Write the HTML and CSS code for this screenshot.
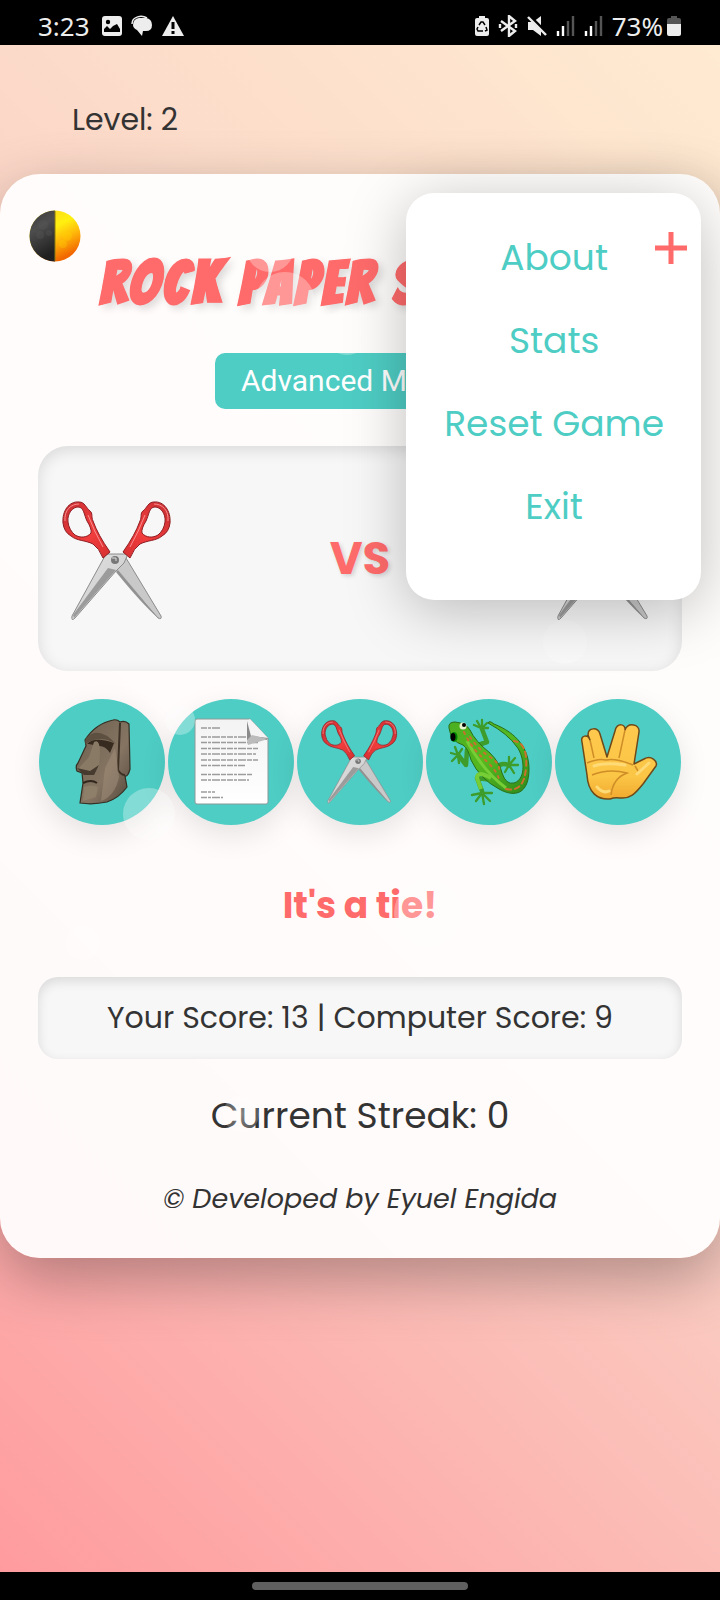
FILE: index.html
```html
<!DOCTYPE html>
<html lang="en">
<head>
<meta charset="utf-8">
<meta name="viewport" content="width=device-width, initial-scale=1">
<title>Rock Paper Scissors</title>
<link rel="stylesheet" href="styles.css">
</head>
<body>
<svg class="defs" aria-hidden="true">
  <defs>
    <linearGradient id="red" x1="0" y1="0" x2="1" y2="1"><stop offset="0" stop-color="#c92f33"/><stop offset=".6" stop-color="#f03c3c"/><stop offset="1" stop-color="#d52f30"/></linearGradient>
    <linearGradient id="steel" x1="0" y1="0" x2="1" y2="1"><stop offset="0" stop-color="#e2e2e2"/><stop offset=".55" stop-color="#d4d4d4"/><stop offset="1" stop-color="#9a9a9a"/></linearGradient>
    <linearGradient id="sun" x1="0" y1="0" x2=".5" y2="1"><stop offset="0" stop-color="#ffd21c"/><stop offset=".45" stop-color="#fff010"/><stop offset=".7" stop-color="#ffb80a"/><stop offset="1" stop-color="#f26800"/></linearGradient>
    <linearGradient id="dark" x1="0" y1="0" x2=".3" y2="1"><stop offset="0" stop-color="#3a3a3a"/><stop offset=".4" stop-color="#4e4e4e"/><stop offset="1" stop-color="#202020"/></linearGradient>
    <linearGradient id="stone" x1="0" y1="0" x2="1" y2="1"><stop offset="0" stop-color="#6c5f4e"/><stop offset=".6" stop-color="#857462"/><stop offset="1" stop-color="#54483b"/></linearGradient>
    <linearGradient id="sheet" x1="0" y1="0" x2="0" y2="1"><stop offset="0" stop-color="#f3f3f3"/><stop offset="1" stop-color="#fff"/></linearGradient>
    <linearGradient id="skin" x1="0" y1="0" x2="0" y2="1"><stop offset="0" stop-color="#ffc94f"/><stop offset=".7" stop-color="#fbc545"/><stop offset="1" stop-color="#f0a92f"/></linearGradient>
    <linearGradient id="green" x1="0" y1="0" x2="1" y2="1"><stop offset="0" stop-color="#4caf22"/><stop offset=".5" stop-color="#55b81f"/><stop offset="1" stop-color="#2e8a1c"/></linearGradient>
    <symbol id="scissors" viewBox="0 0 110 120">
      <path d="M54 69 64 57 99 115Q100 119 96 117Z" fill="#c9c9c9" stroke="#8c8c8c" stroke-width="1"/>
      <path d="M56 69 96 117Q80 103 54 71Z" fill="#929292"/>
      <path d="M44 53 66 53 62 62 54 70 13 117Q9 121 10 115Z" fill="url(#steel)" stroke="#8c8c8c" stroke-width="1"/>
      <path d="M46 67 54 69 12 117 11 114Z" fill="#9b9b9b"/>
      <circle cx="53" cy="59" r="4" fill="#777"/><path d="M50 57h4v3" stroke="#ddd" fill="none"/>
      <g id="grip">
        <path fill-rule="evenodd" fill="url(#red)" stroke="#8e1d22" d="M1 22C0 10 7 0 17 1C23 1 24 7 28 10C31 12 29 16 31 20Q36 34 48 51L41 57Q37 47 31 43C23 39 15 40 9 35Q2 31 1 22ZM6 21C5 12 11 6 16 6C22 6 22 14 25 20Q30 28 29 32C25 37 18 37 13 34Q7 29 6 21Z"/>
        <path d="M3 20C2 9 9 3 17 3M26 14Q32 30 41 46" fill="none" stroke="#f98e8e"/>
      </g>
      <use href="#grip" transform="matrix(-1 0 0 1 109 0)"/>
    </symbol>
  </defs>
</svg>

<header class="status">
  <div class="status-side">
    <span>3:23</span>
    <svg width="22" height="22" viewBox="0 0 22 22"><rect x="1" y="1" width="20" height="20" rx="3" fill="#ededed"/><circle cx="7" cy="7" r="2.2"/><path d="M3 17v-3l3-3 3 3 3-3 4-2 3 5v3z"/></svg>
    <svg width="22" height="22" viewBox="0 0 22 22"><path d="M1 9C1 1 11 0 16 3" fill="none" stroke="#ededed" stroke-width="1.5"/><path d="M8 3h7q6 1 6 7t-6 6h-3l-1 5-5-6q-4-2-4-5 0-6 6-7z" fill="#ededed"/></svg>
    <svg width="24" height="22" viewBox="0 0 24 22"><path d="M12 1 23 21H1z" fill="#ededed"/><path d="M12 7v7M12 16v3" stroke="#000" stroke-width="3"/></svg>
  </div>
  <div class="status-side">
    <svg width="16" height="22" viewBox="0 0 16 22"><path d="M5 1h6v2h2q2 0 2 2v14q0 2-2 2H3q-2 0-2-2V5q0-2 2-2h2z" fill="#ededed"/><path d="m5 10 2-3h2l2 3M12 12l1 3-2 1M9 16H4l-1-2 1-2" fill="none" stroke="#000" stroke-width="1.5"/></svg>
    <svg width="20" height="22" viewBox="0 0 20 22"><path d="m3 6 14 10-6 5V1l6 5L3 16M2 9v4M18 9v4" fill="none" stroke="#ededed" stroke-width="2.4"/></svg>
    <svg width="22" height="22" viewBox="0 0 22 22"><path d="M2 7h5l8-6v20l-8-6H2z" fill="#ededed"/><path d="m2 0 19 19" stroke="#000" stroke-width="4"/><path d="m2 2 18 18" stroke="#ededed" stroke-width="2.4"/></svg>
    <svg width="20" height="22" viewBox="0 0 20 22"><path d="M2 21v-5M7 21V11" stroke="#fff" stroke-width="2.4"/><path d="M12 21V6M17 21V1" stroke="#555" stroke-width="2.4"/></svg>
    <svg width="20" height="22" viewBox="0 0 20 22"><path d="M2 21v-5M7 21V11" stroke="#fff" stroke-width="2.4"/><path d="M12 21V6M17 21V1" stroke="#555" stroke-width="2.4"/></svg>
    <div class="battery"><span>73%</span>
    <svg width="14" height="22" viewBox="0 0 14 22"><path d="M4 1h6v2h2q2 0 2 2v4H0V5q0-2 2-2h2z" fill="#555"/><path d="M0 9h14v10q0 2-2 2H2q-2 0-2-2z" fill="#ededed"/></svg></div>
  </div>
</header>

<div class="level">Level: 2</div>

<main class="card">
  <button class="theme" aria-label="Toggle theme">
    <svg width="52" height="52" viewBox="0 0 52 52"><circle cx="26" cy="26" r="25.500" fill="url(#sun)"/><path d="M26 .5a25.500 25.500 0 0 0 0 51z" fill="url(#dark)"/><path d="M26 1v50" stroke="#8c7a12"/><g fill="#5b5b5b" opacity=".3"><circle cx="14" cy="15" r="5"/><circle cx="11" cy="25" r="4"/><circle cx="20" cy="23" r="3"/></g><g fill="#ffd400" opacity=".3"><circle cx="38" cy="26" r="5"/><circle cx="34" cy="34" r="4"/></g></svg>
  </button>
  <h1 class="title">ROCK PAPER SCISSORS</h1>
  <button class="mode">Advanced Mode</button>

  <section class="arena">
    <svg class="pick" viewBox="0 0 110 120" role="img" aria-label="Your pick: scissors"><use href="#scissors"/></svg>
    <span class="versus">VS</span>
    <svg class="pick" viewBox="0 0 110 120" role="img" aria-label="Computer pick: scissors"><use href="#scissors"/></svg>
  </section>

  <section class="choices">
    <button class="choice" aria-label="Rock"><svg viewBox="0 0 126 126">
      <path d="M46 41Q56 25 74 21Q78 20 81 23Q86 21 90 25L91 70Q89 78 86 77L88 88Q80 99 68 103Q54 106 41 104L44 84 43 74 38 72Q36 67 39 64L47 47Z" fill="url(#stone)" stroke="#342e22" stroke-width="1.200"/>
      <path d="M48 45Q55 37 75 44L71 54Q66 46 59 47L50 45Z" fill="#372b20"/><path d="M47 39Q60 26 77 45Q62 35 46 45Z" fill="#5e5040"/>
      <path d="M55 43Q61 39 61 54L60 68 53 75 39 70 50 58Z" fill="#897a65"/><path d="M38 69 51 72 60 66 55 76 45 76Z" fill="#463b2e"/>
      <path d="M81 24 79 71Q82 76 86 76" fill="none" stroke="#3d3225" stroke-width="2"/><path d="M76 49 66 69 62 102Q76 97 80 78L78 62Z" fill="#9c8b77" opacity=".6"/>
      <path d="M44 84Q52 80 58 84" fill="none" stroke="#30261b" stroke-width="2"/><path d="M45 88Q52 85 59 88L57 98 44 102Z" fill="#93846d" opacity=".7"/>
    </svg></button>
    <button class="choice" aria-label="Paper"><svg viewBox="0 0 126 126">
      <path d="M29 20H82L100 39V103Q100 105 98 105H29Q27 105 27 103V22Q27 20 29 20Z" fill="url(#sheet)" stroke="#8a9a99"/>
      <g stroke="#757575" stroke-width="1.500" opacity=".7" stroke-dasharray="6 1 3 1 8 1 5 1"><path d="M33 29h19M33 38h45M33 43.500h57M33 49.500h57M33 55h55M33 61h57M33 66.500h44M33 75.500h51M33 81h48M33 93h14M33 98.500h22"/></g>
      <path d="M79 22 82 20 100 39 83 38Z" fill="#f4f4f4"/><path d="M79 22 83 37 100 39 99 41 79 41Z" fill="#8b8b8b"/><path d="M79 41 84 36 100 40 80 46Z" fill="#bbb"/>
    </svg></button>
    <button class="choice" aria-label="Scissors"><svg viewBox="0 0 126 126"><use href="#scissors" x="24" y="21" width="77" height="84"/></svg></button>
    <button class="choice" aria-label="Lizard"><svg viewBox="0 0 126 126">
      <g fill="none" stroke="#3d9c2a" stroke-linecap="round" stroke-linejoin="round">
        <path stroke-width="4.500" d="M52 46 61 43 56 30M41 51 40 66 33 57M72 73Q71 62 83 66M66 81 51 79 56 92"/>
        <path stroke-width="2.300" d="M55 29 48 26M55 29 51 22M56 29 56 21M56 29 61 24M56 29 62 29M32 56 25 54M32 56 29 48M32 56 36 50M32 56 26 62M32 56 33 64M83 66 83 58M83 66 89 59M83 66 92 66M83 66 88 74M83 66 79 73M56 94 46 96M56 94 50 102M56 94 58 105M56 94 64 102M56 94 66 94"/>
      </g>
      <path d="M23 29Q22 23 29 23Q40 24 44 31Q49 42 64 54Q74 64 76 74Q80 86 88 84C101 80 98 57 91 48Q82 35 62 24Q63 21 68 25C91 34 103 50 103 70C103 95 89 99 73 90Q54 80 45 61Q42 49 37 46Q25 42 24 33Z" fill="url(#green)" stroke="#286f18"/>
      <path d="M41 42Q57 72 80 89" fill="none" stroke="#76cd35" stroke-width="3"/><path d="M65 79Q51 71 51 79L55 90" fill="none" stroke="#76cd35" stroke-width="4"/>
      <g fill="none" stroke="#cc702d" stroke-linecap="round" stroke-width="2"><path stroke-dasharray="2 5" d="M38 33Q46 50 58 60T73 80M44 38Q53 51 64 58T73 73"/><path stroke-dasharray="5 4" d="M80 90Q98 94 100 69T88 42"/></g>
      <ellipse cx="28" cy="38" rx="3.500" ry="5" fill="#080"/><ellipse cx="27" cy="38" rx="2.500" ry="4"/><circle cx="37" cy="27" r="3.500" fill="#e8f5cf"/><circle cx="38" cy="26" r="2"/>
    </svg></button>
    <button class="choice" aria-label="Spock"><svg viewBox="0 0 126 126">
      <path d="M27 43C25 36 33 35 35 41L33 36C33 28 43 28 45 35L52 58 60 32C62 23 71 25 70 31C73 23 85 25 84 33L79 65 89 60C96 56 103 62 101 67L88 85C80 95 75 100 65 99Q60 98 55 100C43 101 33 94 32 76Z" fill="url(#skin)" stroke="#6f4918" stroke-width="1.500" stroke-linejoin="round"/>
      <path d="M35 41 39 59M70 31 64 59M32 64Q43 59 51 61Q61 59 78 66M37 76Q54 69 72 74Q58 79 56 96M80 67 83 72" fill="none" stroke="#cf8d28" stroke-width="1.500"/>
      <path d="M39 67Q50 63 70 66M42 88Q48 95 54 92M82 75 94 64" fill="none" stroke="#ffdb77" stroke-width="3" stroke-linecap="round"/>
    </svg></button>
  </section>

  <p class="result">It's a tie!</p>
  <p class="score">Your Score: 13 | Computer Score: 9</p>
  <p class="streak">Current Streak: 0</p>
  <footer class="credit">© Developed by Eyuel Engida</footer>

  <div class="bubbles" aria-hidden="true">
    <i class="bubble b1"></i><i class="bubble b2"></i><i class="bubble b3"></i><i class="bubble b4"></i><i class="bubble b5"></i><i class="bubble b6"></i><i class="bubble b7"></i><i class="bubble b8"></i><i class="bubble b9"></i>
  </div>

  <nav class="menu">
    <a href="#about">About</a>
    <a href="#stats">Stats</a>
    <a href="#reset">Reset Game</a>
    <a href="#exit">Exit</a>
    <button class="menu-toggle" aria-label="Close menu"><svg width="34" height="34" viewBox="0 0 34 34"><path d="M17 1v32M1 17h32" stroke="#ff6b6b" stroke-width="5"/></svg></button>
  </nav>
</main>

<div class="navbar"><div class="handle"></div></div>
</body>
</html>
```

FILE: styles.css
```css
* { box-sizing: border-box; }

body {
  margin: 0;
  min-height: 100vh;
  display: flex;
  flex-direction: column;
  font-family: Poppins, Inter, sans-serif;
  font-size: 30px;
  color: #333;
  background: linear-gradient(45deg, #ff9a9e 0%, #fad0c4 50%, #ffecd2 100%);
}

button {
  border: 0;
  padding: 0;
  background: none;
  font: inherit;
  color: inherit;
}

svg { display: block; }
.defs { position: absolute; width: 0; height: 0; }

.status {
  display: flex;
  justify-content: space-between;
  height: 45px;
  padding: 7px 39px 0 38px;
  background: #000;
  color: #ededed;
  font-family: "Noto Sans", sans-serif;
  font-size: 26px;
  line-height: 36px;
}
.status-side, .battery { display: flex; align-items: center; gap: 8px; }
.status-side > span { margin-right: 3px; }
.battery { gap: 4px; }

.level { padding: 57px 72px 36px; line-height: 36px; }

.card {
  position: relative;
  display: flex;
  flex-direction: column;
  padding: 36px 38px 40px;
  border-radius: 40px;
  background: rgba(255, 255, 255, 0.93);
  box-shadow: 0 20px 60px rgba(0, 0, 0, 0.3);
}

.theme { align-self: flex-start; margin-left: -9px; }

.title {
  margin: -15px 0 0;
  font-family: Bangers, "Liberation Sans Narrow", "Liberation Sans", sans-serif;
  font-size: 60px;
  font-weight: 700;
  letter-spacing: 4px;
  line-height: 72px;
  text-align: center;
  white-space: nowrap;
  color: #ff6b6b;
  -webkit-text-stroke: 1px #ff6b6b;
  text-shadow: 4px 4px 8px rgba(0, 0, 0, 0.15);
}

.mode {
  align-self: center;
  min-width: 290px;
  margin: 34px 0 37px;
  padding: 0 26px;
  border-radius: 10px;
  background: #4ecdc4;
  color: #fff;
  font-family: Roboto, sans-serif;
  font-size: 30px;
  line-height: 56px;
  text-align: left;
}

.arena {
  display: flex;
  align-items: center;
  justify-content: space-between;
  height: 225px;
  padding: 4px 24px 0;
  border-radius: 30px;
  background: #f7f7f7;
  box-shadow: inset 0 4px 16px rgba(0, 0, 0, 0.12);
}
.pick { width: 110px; height: 120px; }
.versus {
  padding-bottom: 4px;
  font-size: 45px;
  font-weight: 700;
  line-height: 70px;
  color: #ff6b6b;
  text-shadow: 2px 2px 4px rgba(0, 0, 0, 0.15);
}

.choices {
  display: grid;
  grid-template-columns: repeat(5, 1fr);
  gap: 3px;
  padding: 28px 1px 0;
}
.choice {
  aspect-ratio: 1;
  border-radius: 50%;
  background: #4ecdc4;
  box-shadow: 0 10px 30px rgba(0, 0, 0, 0.1);
}

p { margin: 0; text-align: center; }
.result { padding-top: 57px; font-size: 36px; font-weight: 700; line-height: 48px; color: #ff6b6b; }
.score {
  margin-top: 47px;
  border-radius: 20px;
  background: #f7f7f7;
  box-shadow: inset 0 4px 12px rgba(0, 0, 0, 0.12);
  line-height: 82px;
}
.streak { margin-top: 33px; font-size: 36px; line-height: 48px; }
.credit { margin-top: 40px; font-size: 27px; font-style: italic; line-height: 38px; text-align: center; }

.bubbles { position: absolute; inset: 0; pointer-events: none; }
.bubble { position: absolute; border-radius: 50%; background: rgba(255, 255, 255, 0.3); }
.b1 { left: 246px; top: 50px; width: 48px; height: 48px; }
.b2 { left: 255px; top: 98px; width: 60px; height: 60px; }
.b3 { left: 324px; top: 135px; width: 46px; height: 46px; }
.b4 { left: 543px; top: 446px; width: 44px; height: 44px; }
.b5 { left: 165px; top: 531px; width: 30px; height: 30px; }
.b6 { left: 123px; top: 614px; width: 52px; height: 52px; }
.b7 { left: 394px; top: 705px; width: 68px; height: 68px; }
.b8 { left: 66px; top: 752px; width: 34px; height: 34px; }
.b9 { left: 223px; top: 922px; width: 36px; height: 36px; background: radial-gradient(rgba(255, 255, 255, 0.4), rgba(255, 255, 255, 0.1)); }

.menu {
  position: absolute;
  top: 19px;
  right: 19px;
  display: flex;
  flex-direction: column;
  align-items: center;
  gap: 35px;
  padding: 41px 37px 69px 38px;
  border-radius: 28px;
  background: #fff;
  box-shadow: 0 10px 60px rgba(0, 0, 0, 0.25);
}
.menu a { font-size: 36px; line-height: 48px; white-space: nowrap; color: #4ecdc4; text-decoration: none; }
.menu-toggle { position: absolute; top: 38px; right: 13px; }

.navbar {
  display: flex;
  align-items: center;
  justify-content: center;
  height: 28px;
  margin-top: auto;
  background: #000;
}
.handle { width: 30%; height: 8px; border-radius: 4px; background: #5f5f5f; }
```
